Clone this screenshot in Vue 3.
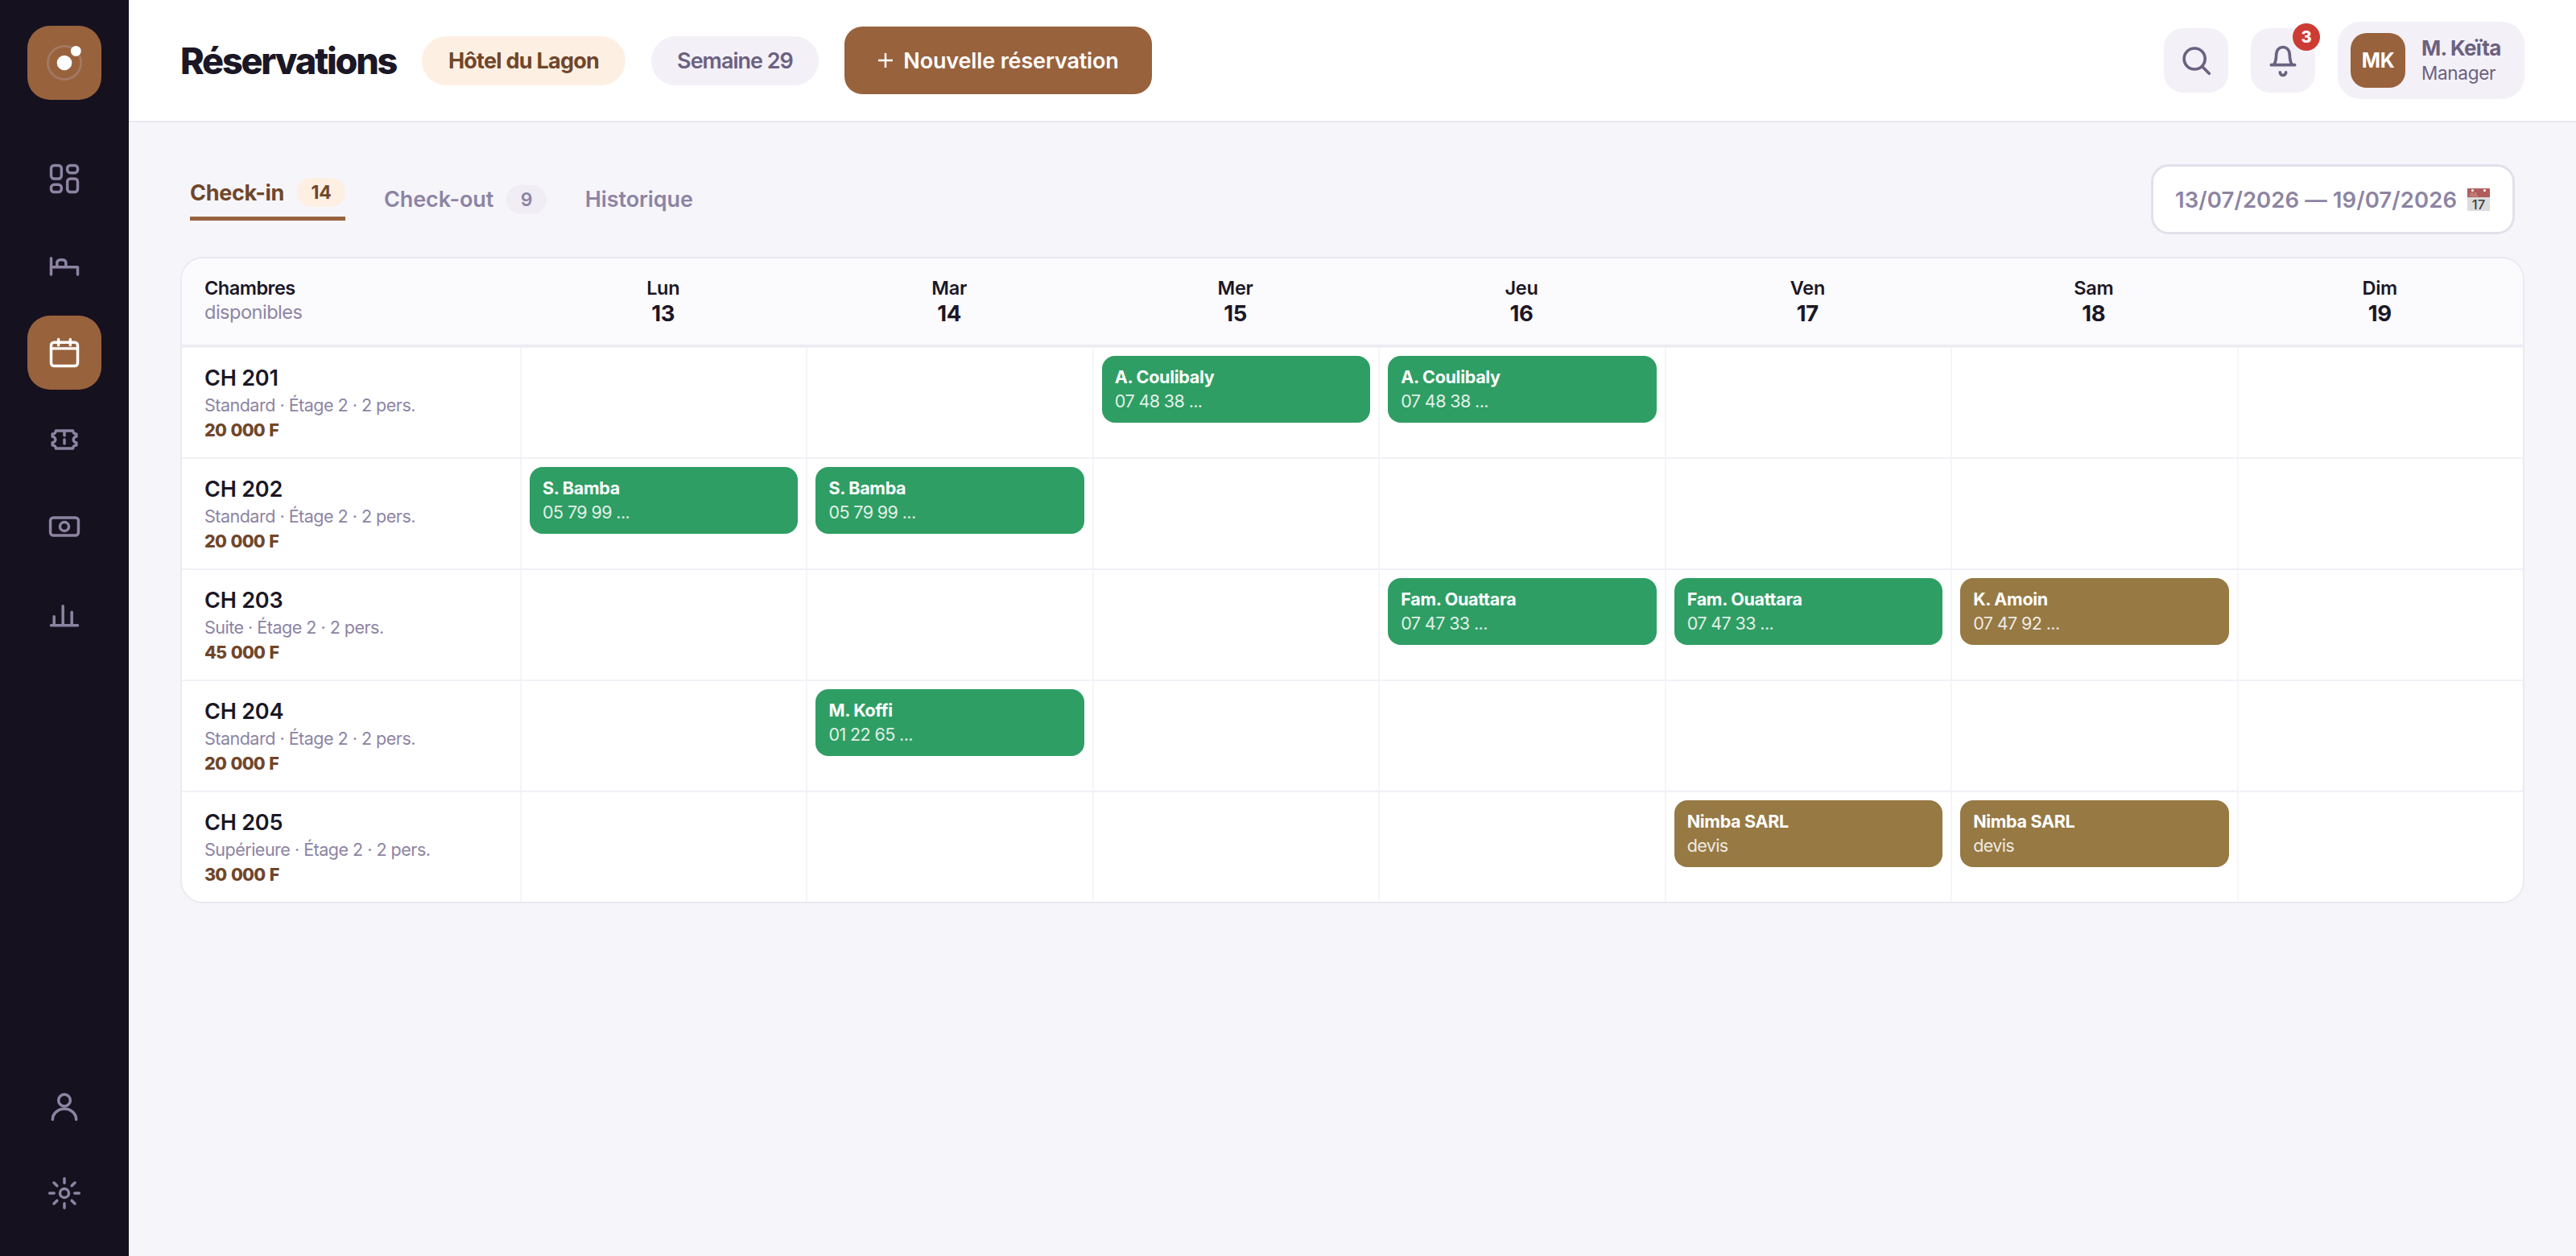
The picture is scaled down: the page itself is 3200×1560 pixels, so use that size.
<template>
  <div class="app">
    <aside class="sidebar">
      <div class="logo">
        <svg width="52" height="52" viewBox="0 0 52 52">
          <circle cx="26" cy="26" r="20.6" fill="none" stroke="#a27a62" stroke-width="2.8" />
          <circle cx="26" cy="26" r="9.3" fill="#fff" />
          <circle cx="40.3" cy="11.4" r="6.4" fill="#fff" />
        </svg>
      </div>
      <nav class="nav">
        <button v-for="item in mainNav" :key="item.id" :class="['nav-btn', { active: item.active }]">
          <svg class="nav-icon" viewBox="0 0 24 24"><path :d="item.path" /></svg>
        </button>
      </nav>
      <nav class="nav nav-bottom">
        <button v-for="item in bottomNav" :key="item.id" class="nav-btn">
          <svg class="nav-icon" viewBox="0 0 24 24"><path :d="item.path" /></svg>
        </button>
      </nav>
    </aside>

    <main class="main">
      <header class="topbar">
        <h1>Réservations</h1>
        <span class="pill pill-hotel">Hôtel du Lagon</span>
        <span class="pill pill-week">Semaine 29</span>
        <button class="new-btn">
          <svg width="20" height="20" viewBox="0 0 20 20"><path d="M10 1v18M1 10h18" stroke="#fff" stroke-width="2.5" /></svg>
          <span>Nouvelle réservation</span>
        </button>

        <div class="topbar-right">
          <button class="icon-btn">
            <svg viewBox="0 0 24 24"><circle cx="11" cy="10.9" r="7.1" /><path d="M16.200 16.200l4.700 4.700" /></svg>
          </button>
          <button class="icon-btn">
            <svg viewBox="0 0 24 24"><path d="M4 15.100h16M5.800 15c1.200-1.600 1.600-3.900 1.700-7.300a4.500 4.700 0 0 1 9 0c.1 3.400.5 5.700 1.700 7.300M10 20.100a2 2 0 0 0 4 0" /></svg>
            <span class="notif">3</span>
          </button>
          <div class="profile">
            <div class="avatar">MK</div>
            <div class="who">
              <div class="who-name">M. Keïta</div>
              <div class="who-role">Manager</div>
            </div>
          </div>
        </div>
      </header>

      <section class="content">
        <div class="toolbar">
          <div class="tabs">
            <div v-for="tab in tabs" :key="tab.label" :class="['tab', { active: tab.active }]">
              <span class="tab-label">{{ tab.label }}</span>
              <span v-if="tab.count" class="tab-count">{{ tab.count }}</span>
            </div>
          </div>
          <div class="date-range">
            <span>13/07/2026 — 19/07/2026</span>
            <svg class="cal-emoji" viewBox="0 0 28 28">
              <rect width="28" height="28" fill="#dcdcdc" />
              <rect width="28" height="11" fill="#b05c5c" />
              <circle cx="6.500" cy="2.500" r="1.600" fill="#fff" />
              <circle cx="21.500" cy="2.500" r="1.600" fill="#fff" />
              <text x="2" y="9.800" font-size="6" fill="#d9aaaa">JUL</text>
              <text x="14" y="25.500" font-size="16.500" text-anchor="middle" fill="#3c3c3c">17</text>
            </svg>
          </div>
        </div>

        <div class="planning">
          <div class="row head">
            <div class="head-rooms">
              <div class="head-title">Chambres</div>
              <div class="head-sub">disponibles</div>
            </div>
            <div v-for="day in days" :key="day.num" class="head-day">
              <div class="day-name">{{ day.name }}</div>
              <div class="day-num">{{ day.num }}</div>
            </div>
          </div>

          <div v-for="room in rooms" :key="room.name" class="row">
            <div class="room">
              <div class="room-name">{{ room.name }}</div>
              <div class="room-info">{{ room.type }} · Étage 2 · 2 pers.</div>
              <div class="room-price">{{ room.price }}</div>
            </div>
            <div v-for="day in days" :key="day.num" class="cell">
              <div v-if="room.bookings[day.num]" :class="['booking', room.bookings[day.num].status]">
                <div class="booking-name">{{ room.bookings[day.num].guest }}</div>
                <div class="booking-sub">{{ room.bookings[day.num].note }}</div>
              </div>
            </div>
          </div>
        </div>
      </section>
    </main>
  </div>
</template>

<script setup>
import { ref } from 'vue'

const mainNav = [
  { id: 'dashboard', path: 'M5 3h3a2 2 0 0 1 2 2v5a2 2 0 0 1-2 2H5a2 2 0 0 1-2-2V5a2 2 0 0 1 2-2zM16 3h3a2 2 0 0 1 2 2v1a2 2 0 0 1-2 2h-3a2 2 0 0 1-2-2V5a2 2 0 0 1 2-2zM16 12h3a2 2 0 0 1 2 2v5a2 2 0 0 1-2 2h-3a2 2 0 0 1-2-2v-5a2 2 0 0 1 2-2zM5 16h3a2 2 0 0 1 2 2v1a2 2 0 0 1-2 2H5a2 2 0 0 1-2-2v-1a2 2 0 0 1 2-2z' },
  { id: 'rooms', path: 'M3 7v11M3 13h18v5M7 13v-3a2 2 0 0 1 2-2h2a2 2 0 0 1 2 2v3' },
  { id: 'bookings', active: true, path: 'M5 5h14a2 2 0 0 1 2 2v12a2 2 0 0 1-2 2H5a2 2 0 0 1-2-2V7a2 2 0 0 1 2-2zM3 9.200h18M8 3v4M16 3v4' },
  { id: 'tickets', path: 'M6.200 6h11.600a2.200 2.200 0 0 0 2.300 2.200V10a2 2 0 0 0 0 4v1.800A2.200 2.200 0 0 0 17.800 18H6.200a2.200 2.200 0 0 0-2.300-2.200V14a2 2 0 0 0 0-4V8.200A2.200 2.200 0 0 0 6.200 6zM12 6v3.300M12 12v2.700' },
  { id: 'cash', path: 'M4.500 6h15a2 2 0 0 1 2 2v8a2 2 0 0 1-2 2h-15a2 2 0 0 1-2-2V8a2 2 0 0 1 2-2zM9 12a3 3 0 1 0 6 0a3 3 0 1 0-6 0' },
  { id: 'stats', path: 'M3 20h18M5 20v-6M11 20V7M17 20v-9' }
]

const bottomNav = [
  { id: 'account', path: 'M8 8a4 4 0 1 0 8 0a4 4 0 1 0-8 0M4 21a8 7.200 0 0 1 16 0' },
  { id: 'settings', path: 'M9 12a3 3 0 1 0 6 0a3 3 0 1 0-6 0M12 2v3M12 19v3M2 12h3M19 12h3M4.900 4.900L7 7M17 17l2.100 2.100M4.900 19.100L7 17M17 7l2.100-2.100' }
]

const tabs = ref([
  { label: 'Check-in', count: 14, active: true },
  { label: 'Check-out', count: 9 },
  { label: 'Historique' }
])

const days = [
  { name: 'Lun', num: 13 },
  { name: 'Mar', num: 14 },
  { name: 'Mer', num: 15 },
  { name: 'Jeu', num: 16 },
  { name: 'Ven', num: 17 },
  { name: 'Sam', num: 18 },
  { name: 'Dim', num: 19 }
]

const booking = (guest, note, status = 'confirmed') => ({ guest, note, status })

const rooms = ref([
  {
    name: 'CH 201', type: 'Standard', price: '20 000 F',
    bookings: { 15: booking('A. Coulibaly', '07 48 38 ...'), 16: booking('A. Coulibaly', '07 48 38 ...') }
  },
  {
    name: 'CH 202', type: 'Standard', price: '20 000 F',
    bookings: { 13: booking('S. Bamba', '05 79 99 ...'), 14: booking('S. Bamba', '05 79 99 ...') }
  },
  {
    name: 'CH 203', type: 'Suite', price: '45 000 F',
    bookings: {
      16: booking('Fam. Ouattara', '07 47 33 ...'),
      17: booking('Fam. Ouattara', '07 47 33 ...'),
      18: booking('K. Amoin', '07 47 92 ...', 'pending')
    }
  },
  {
    name: 'CH 204', type: 'Standard', price: '20 000 F',
    bookings: { 14: booking('M. Koffi', '01 22 65 ...') }
  },
  {
    name: 'CH 205', type: 'Supérieure', price: '30 000 F',
    bookings: { 17: booking('Nimba SARL', 'devis', 'pending'), 18: booking('Nimba SARL', 'devis', 'pending') }
  }
])
</script>

<style>
body {
  background: #f6f5fa;
}
</style>

<style scoped>
.app {
  display: flex;
  min-height: 100vh;
  background: #f6f5fa;
  color: #1b1726;
  font-family: Inter, "Liberation Sans", sans-serif;
  letter-spacing: -0.3px;
}

.app * {
  box-sizing: border-box;
}

button {
  border: none;
  padding: 0;
  font-family: inherit;
  letter-spacing: inherit;
  cursor: pointer;
}

/* Sidebar */
.sidebar {
  width: 160px;
  flex-shrink: 0;
  background: #16111f;
  display: flex;
  flex-direction: column;
  align-items: center;
  padding: 32px 0;
  box-sizing: border-box;
}

.logo {
  width: 92px;
  height: 92px;
  border-radius: 28px;
  background: #98623d;
  display: flex;
  align-items: center;
  justify-content: center;
  margin-bottom: 52px;
}

.nav {
  display: flex;
  flex-direction: column;
  gap: 16px;
}

.nav-bottom {
  margin-top: auto;
}

.nav-btn {
  width: 92px;
  height: 92px;
  border-radius: 28px;
  background: transparent;
  color: #8d84a3;
  display: flex;
  align-items: center;
  justify-content: center;
}

.nav-btn.active {
  background: #98623d;
  color: #fff;
}

.nav-icon {
  width: 44px;
  height: 44px;
  fill: none;
  stroke: currentColor;
  stroke-width: 1.9;
  stroke-linecap: round;
  stroke-linejoin: round;
}

/* Topbar */
.main {
  flex: 1;
  min-width: 0;
}

.topbar {
  height: 152px;
  padding: 0 64px;
  background: #fff;
  border-bottom: 2px solid #e9e7f0;
  display: flex;
  align-items: center;
  gap: 32px;
}

h1 {
  margin: 0;
  width: 268px;
  font-size: 45px;
  font-weight: 800;
  letter-spacing: -2.2px;
  white-space: nowrap;
}

.pill {
  height: 61px;
  padding: 0 32px;
  border-radius: 32px;
  display: flex;
  align-items: center;
  justify-content: center;
  font-size: 27px;
  white-space: nowrap;
}

.pill-hotel {
  width: 253px;
  background: #fdf0e3;
  color: #70462a;
  font-weight: 700;
  letter-spacing: -0.75px;
}

.pill-week {
  width: 208px;
  background: #f3f0f8;
  color: #6b6180;
  font-weight: 600;
  letter-spacing: -1px;
}

.new-btn {
  width: 382px;
  height: 84px;
  border-radius: 22px;
  background: #98623d;
  color: #fff;
  font-size: 27px;
  font-weight: 600;
  letter-spacing: -0.15px;
  display: flex;
  align-items: center;
  justify-content: center;
  gap: 12px;
  white-space: nowrap;
}

.topbar-right {
  margin-left: auto;
  display: flex;
  align-items: center;
  gap: 28px;
}

.icon-btn {
  position: relative;
  width: 80px;
  height: 80px;
  border-radius: 24px;
  background: #f3f0f8;
  display: flex;
  align-items: center;
  justify-content: center;
}

.icon-btn svg {
  width: 44px;
  height: 44px;
  fill: none;
  stroke: #6b6180;
  stroke-width: 2;
  stroke-linecap: round;
  stroke-linejoin: round;
}

.notif {
  position: absolute;
  top: -6px;
  right: -6px;
  width: 34px;
  height: 34px;
  border-radius: 50%;
  background: #cd3c34;
  color: #fff;
  font-size: 20px;
  font-weight: 800;
  line-height: 34px;
  text-align: center;
}

.profile {
  width: 232px;
  height: 96px;
  padding: 0 16px;
  border-radius: 28px;
  background: #f3f0f8;
  color: #6b6180;
  display: flex;
  align-items: center;
  gap: 20px;
}

.avatar {
  width: 68px;
  height: 68px;
  border-radius: 20px;
  background: #98623d;
  color: #fff;
  font-size: 25px;
  font-weight: 700;
  line-height: 68px;
  text-align: center;
}

.who {
  white-space: nowrap;
}

.who-name {
  font-size: 26px;
  font-weight: 700;
  line-height: 31px;
  letter-spacing: -0.75px;
}

.who-role {
  font-size: 22.500px;
  line-height: 31px;
}

/* Tabs and date range */
.content {
  padding: 52px 64px 0;
}

.toolbar {
  height: 87px;
  margin: 0 12px 28px;
  display: flex;
  align-items: center;
  justify-content: space-between;
}

.tabs {
  display: flex;
  align-items: center;
  gap: 48px;
}

.tab {
  display: flex;
  align-items: center;
  gap: 16px;
  height: 36px;
  font-size: 27px;
  font-weight: 600;
  letter-spacing: -0.1px;
  color: #8d84a3;
}

.tab.active {
  height: 53px;
  padding-bottom: 12px;
  border-bottom: 5px solid #98623d;
  color: #70462a;
  font-weight: 700;
  letter-spacing: -0.32px;
}

.tab-count {
  height: 36px;
  padding: 0 17.500px;
  border-radius: 18px;
  background: #f0edf5;
  font-size: 23px;
  line-height: 36px;
}

.tab.active .tab-count {
  background: #fdf0e3;
}

.date-range {
  width: 452px;
  height: 87px;
  padding: 0 28px 0 27px;
  border: 3px solid #e4dfeb;
  border-radius: 22px;
  background: #fff;
  color: #8d84a3;
  font-size: 27.500px;
  font-weight: 600;
  letter-spacing: 0.08px;
  display: flex;
  align-items: center;
  justify-content: space-between;
  white-space: nowrap;
}

.cal-emoji {
  width: 28px;
  height: 28px;
  letter-spacing: 0;
  font-weight: 500;
}

/* Planning */
.planning {
  border: 2px solid #ebe9f1;
  border-radius: 28px;
  background: #fff;
  overflow: hidden;
}

.row {
  display: grid;
  grid-template-columns: 420px repeat(7, 1fr);
  height: 138px;
  border-top: 2px solid #f2f0f6;
}

.row.head {
  height: 109px;
  border-top: none;
  border-bottom: 2px solid #ebe9f1;
  background: #fbfafd;
}

.head-rooms {
  padding: 22px 28px 0;
  font-size: 23.500px;
  letter-spacing: -0.48px;
}

.head-title {
  font-weight: 600;
  line-height: 30px;
}

.head-sub {
  line-height: 29px;
  color: #8d84a3;
}

.head-day {
  padding-top: 22px;
  text-align: center;
}

.day-name {
  font-size: 23.500px;
  font-weight: 600;
  line-height: 30px;
}

.day-num {
  font-size: 27.500px;
  font-weight: 700;
  line-height: 33px;
}

.room {
  padding: 20px 28px 0;
  white-space: nowrap;
}

.room-name {
  font-size: 27px;
  font-weight: 600;
  line-height: 36px;
  letter-spacing: -0.2px;
}

.room-info {
  font-size: 21.500px;
  line-height: 31px;
  letter-spacing: -0.5px;
  color: #8d84a3;
}

.room-price {
  font-size: 21.500px;
  font-weight: 800;
  line-height: 31px;
  letter-spacing: -0.75px;
  word-spacing: 1.500px;
  color: #70462a;
}

.cell {
  padding: 10px;
  border-left: 2px solid #f5f4f8;
}

.booking {
  height: 83px;
  padding: 12px 16px;
  border-radius: 16px;
  color: #fff;
  font-size: 21.500px;
  line-height: 29.500px;
  white-space: nowrap;
}

.booking.confirmed {
  background: #2f9e64;
}

.booking.pending {
  background: #967943;
}

.booking-name {
  font-weight: 700;
}

.booking-sub {
  opacity: 0.85;
  letter-spacing: -0.6px;
}
</style>
